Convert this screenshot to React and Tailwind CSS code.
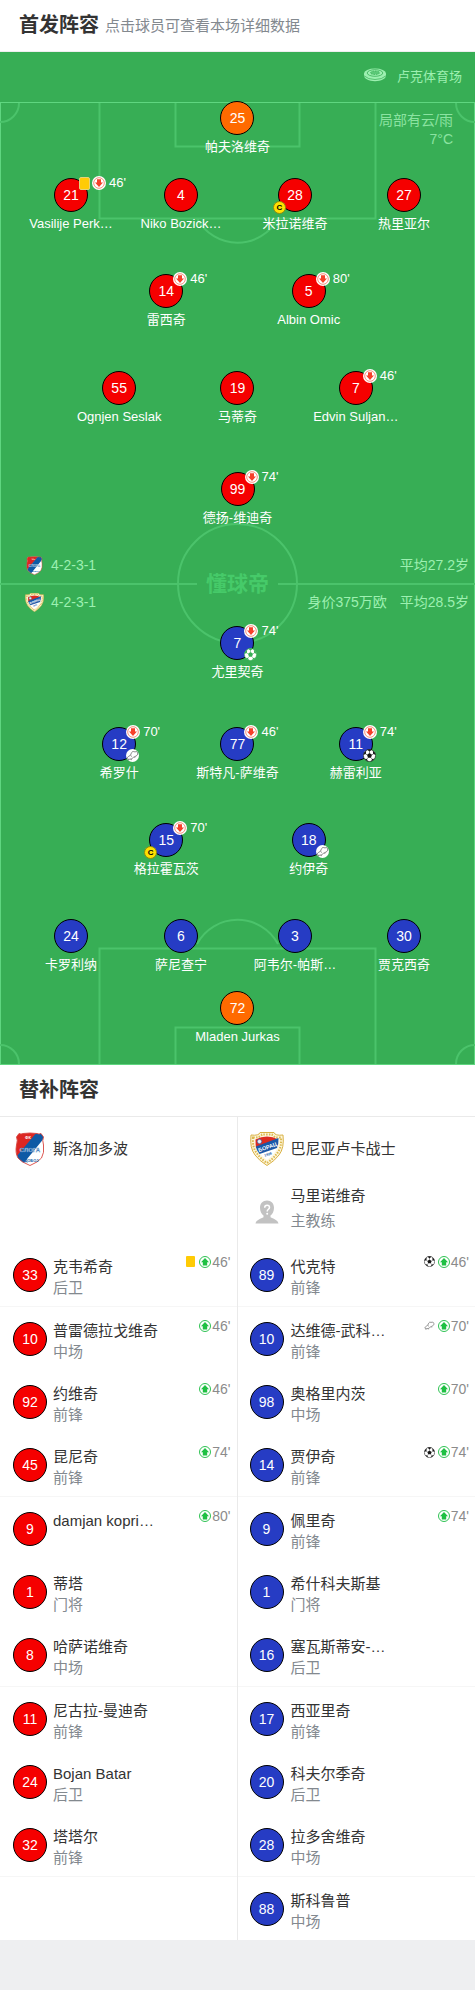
const FONT = "font-['Liberation_Sans','Noto_Sans_CJK_SC',sans-serif]";

const BACK_FOUR = 'grid-cols-[110fr_110fr_118fr_100fr] pl-4 pr-[21px]';

const home = [
  { cols: 'grid-cols-1', gap: '', players: [{ n: 25, name: '帕夫洛维奇', keeper: true }] },
  {
    cols: BACK_FOUR,
    gap: 'mt-[22px]',
    players: [
      { n: 21, name: 'Vasilije Perk…', off: "46'", card: true },
      { n: 4, name: 'Niko Bozick…' },
      { n: 28, name: '米拉诺维奇', captain: true },
      { n: 27, name: '热里亚尔' },
    ],
  },
  {
    cols: 'grid-cols-2 px-[95px]',
    gap: 'mt-[41px]',
    players: [
      { n: 14, name: '雷西奇', off: "46'" },
      { n: 5, name: 'Albin Omic', off: "80'" },
    ],
  },
  {
    cols: 'grid-cols-3 px-[60px]',
    gap: 'mt-[42px]',
    players: [
      { n: 55, name: 'Ognjen Seslak' },
      { n: 19, name: '马蒂奇' },
      { n: 7, name: 'Edvin Suljan…', off: "46'" },
    ],
  },
  { cols: 'grid-cols-1', gap: 'mt-[46px]', players: [{ n: 99, name: '德扬-维迪奇', off: "74'" }] },
];

const away = [
  { cols: 'grid-cols-1', gap: 'mt-[13px]', players: [{ n: 7, name: '尤里契奇', off: "74'", mark: 'penalty' }] },
  {
    cols: 'grid-cols-3 px-[60px]',
    gap: 'mt-[46px]',
    players: [
      { n: 12, name: '希罗什', off: "70'", mark: 'assist' },
      { n: 77, name: '斯特凡-萨维奇', off: "46'" },
      { n: 11, name: '赫雷利亚', off: "74'", mark: 'goal' },
    ],
  },
  {
    cols: 'grid-cols-2 px-[95px]',
    gap: 'mt-[41px]',
    players: [
      { n: 15, name: '格拉霍瓦茨', off: "70'", captain: true },
      { n: 18, name: '约伊奇', mark: 'assist' },
    ],
  },
  {
    cols: BACK_FOUR,
    gap: 'mt-[41px]',
    players: [
      { n: 24, name: '卡罗利纳' },
      { n: 6, name: '萨尼查宁' },
      { n: 3, name: '阿韦尔-帕斯…' },
      { n: 30, name: '贾克西奇' },
    ],
  },
  { cols: 'grid-cols-1', gap: 'mt-[17px]', players: [{ n: 72, name: 'Mladen Jurkas', keeper: true }] },
];

const homeSubs = [
  { n: 33, name: '克韦希奇', role: '后卫', on: "46'", card: true },
  { n: 10, name: '普雷德拉戈维奇', role: '中场', on: "46'" },
  { n: 92, name: '约维奇', role: '前锋', on: "46'" },
  { n: 45, name: '昆尼奇', role: '前锋', on: "74'" },
  { n: 9, name: 'damjan kopri…', role: '', on: "80'" },
  { n: 1, name: '蒂塔', role: '门将' },
  { n: 8, name: '哈萨诺维奇', role: '中场' },
  { n: 11, name: '尼古拉-曼迪奇', role: '前锋' },
  { n: 24, name: 'Bojan Batar', role: '后卫' },
  { n: 32, name: '塔塔尔', role: '前锋' },
];

const awaySubs = [
  { n: 89, name: '代克特', role: '前锋', on: "46'", mark: 'goal' },
  { n: 10, name: '达维德-武科…', role: '前锋', on: "70'", mark: 'assist' },
  { n: 98, name: '奥格里内茨', role: '中场', on: "70'" },
  { n: 14, name: '贾伊奇', role: '前锋', on: "74'", mark: 'goal' },
  { n: 9, name: '佩里奇', role: '前锋', on: "74'" },
  { n: 1, name: '希什科夫斯基', role: '门将' },
  { n: 16, name: '塞瓦斯蒂安-…', role: '后卫' },
  { n: 17, name: '西亚里奇', role: '前锋' },
  { n: 20, name: '科夫尔季奇', role: '后卫' },
  { n: 28, name: '拉多舍维奇', role: '中场' },
  { n: 88, name: '斯科鲁普', role: '中场' },
];

function OffIcon() {
  return (
    <svg viewBox="0 0 14 14" className="size-3.5 shrink-0" aria-hidden="true">
      <circle cx="7" cy="7" r="7" fill="#fff" />
      <circle cx="7" cy="7" r="5.3" fill="none" stroke="#f4735c" strokeWidth="0.8" />
      <path d="M5 3.300h4v3.200h2L7 11 3 6.500h2z" fill="#f5402a" />
    </svg>
  );
}

function OnIcon() {
  return (
    <svg viewBox="0 0 12 12" className="size-3 shrink-0" aria-hidden="true">
      <circle cx="6" cy="6" r="5.500" fill="#fff" stroke="#2fc253" strokeWidth="1" />
      <path d="M6 2l4 4.200H8.200v3.400H3.800V6.200H2z" fill="#1fc043" />
    </svg>
  );
}

function Ball({ color, className }) {
  return (
    <svg viewBox="0 0 24 24" className={className} aria-hidden="true">
      <circle cx="12" cy="12" r="11.2" fill="#fff" stroke={color} strokeWidth="1.2" />
      <g fill={color}>
        <path d="M12 7.4l4.6 3.3-1.8 5.3H9.2l-1.8-5.3z" />
        <path d="M7.500 1.400L12 4.700 16.500 1.400Q12 -.5 7.500 1.400z" />
        <path d="M23 10.500L18.700 9.200 18.200 3.200Q22 5.400 23 10.500z" />
        <path d="M1 10.500L5.300 9.200 5.800 3.200Q2 5.400 1 10.500z" />
        <path d="M21.200 18.200L16.800 18.300 14.800 22.600Q18.800 21.800 21.200 18.200z" />
        <path d="M2.800 18.200L7.200 18.300 9.200 22.600Q5.200 21.800 2.800 18.200z" />
      </g>
      <path
        d="M12 7.400V4M16.600 10.700l2.600-1.600M14.800 16l2.200 2.800M9.200 16L7 18.800M7.400 10.700L4.800 9.100"
        stroke={color}
        strokeWidth="1"
      />
    </svg>
  );
}

function Boot({ className, disc }) {
  return (
    <svg viewBox="0 0 24 24" className={className} aria-hidden="true">
      {disc && <circle cx="12" cy="12" r="12" fill="#fff" />}
      <path
        d="M2 17c.5-2.500 3.500-3.500 6-5.500 1.500-1.500 1.500-5 4-6.500 2.500-1 4 1 6 0 1.500-.8 3 .5 3.500 2.500.5 2.500-1 4.500-3 5.500-3 1.500-4 1.500-6 3.500-1.500 1.500-3.500 2.500-6 2.500-2.500.2-4.500 0-4.500-2z"
        fill="#fff"
        stroke="#6f6f6f"
        strokeWidth="1.600"
        strokeLinejoin="round"
      />
      <path d="M8 11.500l3 2.500M4.500 19l-.5 2M9.500 18.500l.5 2M15.500 15l1.500 1.500" fill="none" stroke="#6f6f6f" strokeWidth="1.400" />
    </svg>
  );
}

function Mark({ kind }) {
  if (kind === 'assist') return <Boot disc className="size-[13px]" />;
  return kind === 'goal' ? (
    <Ball color="#161616" className="size-[13px]" />
  ) : (
    <Ball color="#37ae55" className="size-[13px]" />
  );
}

function HomeCrest({ className }) {
  return (
    <svg viewBox="0 0 34 34" className={className} role="img" aria-label="斯洛加多波">
      <defs>
        <clipPath id="home-shield">
          <path d="M6 1.500q2 1 4 0 7-1 14 0 2 1 4 0l2.500 3.500q-1.500 3 0 8 1 8-2 13-3 4-11.500 7.500Q8 30 5 26 2 21 3.500 13q1.500-5 0-8z" />
        </clipPath>
      </defs>
      <g clipPath="url(#home-shield)">
        <path d="M0 0h34v34H0z" fill="#fff" />
        <path d="M0 0h25L2 27H0z" fill="#dc2722" />
        <path d="M24 0h8v5L10 32 3 25z" fill="#0e5aa5" />
      </g>
      <path
        d="M6 1.500q2 1 4 0 7-1 14 0 2 1 4 0l2.500 3.500q-1.500 3 0 8 1 8-2 13-3 4-11.500 7.500Q8 30 5 26 2 21 3.500 13q1.500-5 0-8z"
        fill="none"
        stroke="#d8453f"
        strokeWidth="0.900"
      />
      <text x="17" y="19.500" textAnchor="middle" fontSize="6" fontWeight="700" fill="#fff" stroke="#3c7cba" strokeWidth="0.400">СЛОГА</text>
      <text x="18.500" y="29.500" textAnchor="middle" fontSize="4" fontWeight="700" fill="#0e5aa5">ДОБОЈ</text>
      <text x="15" y="7" textAnchor="middle" fontSize="4" fontWeight="700" fill="#fff">ФК</text>
    </svg>
  );
}

function AwayCrest({ className }) {
  return (
    <svg viewBox="0 0 34 34" className={className} role="img" aria-label="巴尼亚卢卡战士">
      <path d="M1 3q8 1 9-2.500h14Q25 4 33 3q1.500 13-4 20-4.500 6-12 10.500Q9.500 29 5 23-.5 16 1 3z" fill="#fdf6dc" stroke="#d9b145" strokeWidth="1" />
      <path d="M3 5.500q7 .5 9-3h10q2 3.500 9 3 .8 10-4 16-4 5.500-10 9.500-6-4-10-9.500-4.800-6-4-16z" fill="none" stroke="#dcb84f" strokeWidth="2" strokeDasharray="1.500 1.300" />
      <path d="M5.500 7.500Q17 1.500 28.500 7.500q0 8-4 13.500-3 4-7.500 7-4.500-3-7.500-7-4-5.500-4-13.500z" fill="#fff" />
      <path d="M5.500 7.500Q17 1.500 28.500 7.500L6 16q-.5-4-.5-8.500z" fill="#dd2a20" />
      <path d="M5.800 14.500L28.500 6q.2 6-1.500 10L9.500 22q-3-3.500-3.700-7.500z" fill="#1958a8" />
      <circle cx="9.500" cy="9.500" r="2.200" fill="#e8eef8" stroke="#1958a8" strokeWidth="0.600" />
      <text x="17.500" y="17" textAnchor="middle" fontSize="5.500" fontWeight="700" fill="#fff" transform="rotate(-20 17.500 15)">БОРАЦ</text>
      <text x="18" y="23.500" textAnchor="middle" fontSize="3.500" fontWeight="700" fill="#1958a8" transform="rotate(-20 18 22)">1926</text>
    </svg>
  );
}

function StadiumIcon() {
  return (
    <svg viewBox="0 0 24 14" className="mb-1 h-3.5 w-6" aria-hidden="true">
      <path d="M1 5.500v2.300c0 3 5 5.400 11 5.400s11-2.400 11-5.400V5.500z" fill="#9df0b1" />
      <ellipse cx="12" cy="5.500" rx="11" ry="4.900" fill="#9df0b1" />
      <ellipse cx="12" cy="5" rx="7.800" ry="3.300" fill="none" stroke="#37ae55" strokeWidth="0.800" />
      <ellipse cx="12" cy="4.800" rx="4.500" ry="1.700" fill="#5cc878" stroke="#37ae55" strokeWidth="0.800" strokeDasharray="1.500 1" />
      <path d="M1 7.800q4 3.700 11 3.700t11-3.700" fill="none" stroke="#37ae55" strokeWidth="0.700" />
    </svg>
  );
}

function CoachIcon() {
  return (
    <svg viewBox="0 0 24 24" className="size-6" aria-hidden="true">
      <path d="M12 .5c4.200 0 7 3 7 7.200 0 3.600-1.500 6.300-3.500 7.800v1.800c2.500 1.500 7 2.200 8 6.200H.5c1-4 5.500-4.700 8-6.200v-1.800C6.500 14 5 11.300 5 7.700 5 3.500 7.800.5 12 .5z" fill="#c2c2c2" />
      <path d="M9.700 7.700c0-1.600 1-2.500 2.400-2.500s2.400.9 2.400 2.200c0 1.900-2.300 1.900-2.300 4" fill="none" stroke="#fff" strokeWidth="1.500" />
      <circle cx="12.200" cy="13.800" r="1" fill="#fff" />
    </svg>
  );
}

function PitchLines() {
  return (
    <svg
      viewBox="0 0 475 963"
      preserveAspectRatio="none"
      className="absolute inset-x-0 bottom-0 h-[963px] w-full"
      fill="none"
      stroke="#4bc36b"
      strokeWidth="2"
      aria-hidden="true"
    >
      <rect x="0.500" y="0.500" width="474" height="962" stroke="#5fd680" strokeWidth="1" />
      <path d="M19 1a19 19 0 0 1-19 19M456 1a19 19 0 0 0 19 19M19 962a19 19 0 0 0-19-19M456 962a19 19 0 0 1 19-19" />
      <path d="M99.500 1v115.500h276V1M175.500 1v43.500h124V1M197 116.500a46 46 0 0 0 81 0" />
      <path d="M99.500 962V846.500h276V962M175.500 962v-36.500h124V962M197 842a46 46 0 0 1 81 0" />
      <circle cx="237.500" cy="481.500" r="59.500" />
      <path d="M0 482h197M278 482h197" />
    </svg>
  );
}

function Shirt({ n, tone }) {
  const tones = { red: 'bg-[#f50000]', blue: 'bg-[#263cc4]', orange: 'bg-[#ff6a00]' };
  return (
    <span
      className={`flex size-[34px] shrink-0 items-center justify-center rounded-full border border-black text-sm leading-none text-white ${tones[tone]}`}
    >
      {n}
    </span>
  );
}

function Player({ p, tone }) {
  return (
    <button type="button" className="flex flex-col items-center gap-[3px] text-white">
      <span className="relative">
        <Shirt n={p.n} tone={p.keeper ? 'orange' : tone} />
        {p.card && (
          <span className="absolute -top-px left-[25px] h-[13px] w-[11px] rounded-[2px] border border-[#e6d27a] bg-[#ffcb05]" />
        )}
        {p.off && (
          <span
            className={`absolute -top-0.5 flex items-center gap-[3px] text-[13px] leading-[14px] ${p.card ? 'left-[38px]' : 'left-6'}`}
          >
            <OffIcon />
            {p.off}
          </span>
        )}
        {p.captain && (
          <span className="absolute -bottom-0.5 -left-[5px] flex size-[13px] items-center justify-center rounded-full border border-[#8f8a10] bg-[#ffe100] text-[8px] leading-none font-bold text-black">
            C
          </span>
        )}
        {p.mark && (
          <span className="absolute -right-[3px] -bottom-px">
            <Mark kind={p.mark} />
          </span>
        )}
      </span>
      <span className="text-[13px] leading-[18px] whitespace-nowrap">{p.name}</span>
    </button>
  );
}

function Line({ row, tone }) {
  return (
    <div className={`grid ${row.cols} ${row.gap}`}>
      {row.players.map((p) => (
        <div key={p.n} className="flex justify-center">
          <Player p={p} tone={tone} />
        </div>
      ))}
    </div>
  );
}

function SubRow({ p, tone, index }) {
  const size = ['min-h-[63px] border-b border-[#f6f6f6]', 'min-h-[63px]', 'min-h-16'][index % 3];
  return (
    <li className={`flex items-center ${index === 0 ? 'min-h-16 border-b border-[#f6f6f6]' : size}`}>
      <button type="button" className={`flex flex-1 items-center text-left ${tone === 'red' ? 'gap-1.5' : 'gap-[7px]'}`}>
        <Shirt n={p.n} tone={tone} />
        <span className="flex flex-1 flex-col pt-1 text-[15px] leading-[21px]">
          <span className="whitespace-nowrap text-[#333]">{p.name}</span>
          <span className="min-h-[21px] text-[#83898f]">{p.role}</span>
        </span>
        {p.on && (
          <span className="flex items-center gap-px self-start pt-px text-sm leading-[18px] text-[#8b8b8b]">
            {p.card && <span className="mr-[3px] h-[11px] w-[9px] rounded-[1px] bg-[#ffcb05]" />}
            {p.mark === 'goal' && <Ball color="#161616" className="mr-0.5 size-[11px]" />}
            {p.mark === 'assist' && <Boot className="mr-0.5 size-[11px]" />}
            <OnIcon />
            {p.on}
          </span>
        )}
      </button>
    </li>
  );
}

export default function App() {
  return (
    <div className={`min-h-screen bg-[#eeeff1] ${FONT}`}>
      <header className="flex items-center gap-1.5 border-b border-[#eee] bg-white px-[19px] py-[9px] text-[#333]">
        <h2 className="text-xl leading-[33px] font-bold">首发阵容</h2>
        <p className="text-[15px] leading-[33px] text-[#83898f]">点击球员可查看本场详细数据</p>
      </header>

      <section className="relative bg-[#37ae55] pb-[19px]">
        <PitchLines />
        <div className="relative">
          <div className="flex h-[49px] items-center justify-end gap-2.5 pr-[13px] text-[13px] text-[#9df0b1]">
            <StadiumIcon />
            <span>卢克体育场</span>
          </div>
          <div className="absolute top-[59px] right-[22px] text-right text-sm leading-[19px] text-[#8be3a1]">
            <p>局部有云/雨</p>
            <p>7°C</p>
          </div>

          {home.map((row, i) => (
            <Line key={i} row={row} tone="red" />
          ))}

          <div className="relative mt-[27px] flex flex-col gap-[15px] pr-1.5 pl-[25px] text-sm leading-[22px] text-[#9df0b1]">
            <div className="flex items-center gap-[7px]">
              <HomeCrest className="size-[19px]" />
              <span>4-2-3-1</span>
              <span className="ml-auto">平均27.2岁</span>
            </div>
            <div className="flex items-center gap-[7px]">
              <AwayCrest className="size-[19px]" />
              <span>4-2-3-1</span>
              <span className="ml-auto">身价375万欧</span>
              <span className="ml-1.5">平均28.5岁</span>
            </div>
            <span className="absolute inset-0 flex items-center justify-center text-[21px] font-bold text-[#46ca69]">
              懂球帝
            </span>
          </div>

          {away.map((row, i) => (
            <Line key={i} row={row} tone="blue" />
          ))}
        </div>
      </section>

      <section className="bg-white">
        <h2 className="border-b border-[#eaeaea] px-[19px] pt-[9px] pb-2.5 text-xl leading-8 font-bold text-[#333]">替补阵容</h2>
        <div className="grid grid-cols-2">
          <div className="border-r border-[#eaeaea]">
            <div className="flex min-h-[63px] items-center gap-1.5 pl-[13px] text-[15px] text-[#333]">
              <HomeCrest className="size-[34px]" />
              <h3 className="pt-0.5">斯洛加多波</h3>
            </div>
            <div className="min-h-[63px]" />
            <ul className="[&>li]:pr-1.5 [&>li]:pl-[13px]">
              {homeSubs.map((p, i) => (
                <SubRow key={p.n} p={p} tone="red" index={i} />
              ))}
            </ul>
          </div>
          <div>
            <div className="flex min-h-[63px] items-center gap-[7px] pl-3 text-[15px] text-[#333]">
              <AwayCrest className="size-[34px]" />
              <h3 className="pt-0.5">巴尼亚卢卡战士</h3>
            </div>
            <div className="flex min-h-[63px] items-center gap-[7px] pl-3 text-[15px] leading-[25px]">
              <span className="flex w-[34px] justify-center">
                <CoachIcon />
              </span>
              <div className="pb-2">
                <p className="text-[#333]">马里诺维奇</p>
                <p className="text-[#83898f]">主教练</p>
              </div>
            </div>
            <ul className="[&>li]:pr-1.5 [&>li]:pl-3">
              {awaySubs.map((p, i) => (
                <SubRow key={p.n} p={p} tone="blue" index={i} />
              ))}
            </ul>
          </div>
        </div>
      </section>
    </div>
  );
}
